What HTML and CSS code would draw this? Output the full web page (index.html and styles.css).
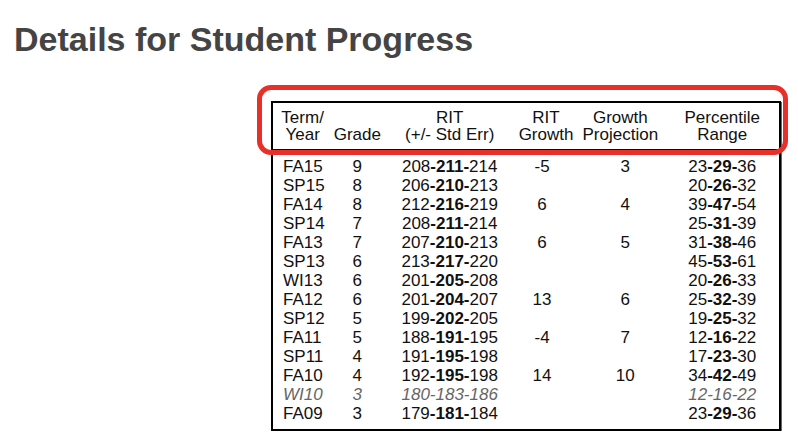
FILE: index.html
```html
<!DOCTYPE html>
<html>
<head>
<meta charset="utf-8">
<link rel="stylesheet" href="styles.css">
</head>
<body>
<h1 class="title">Details for Student Progress</h1>
<div class="wrap">
<table class="progress">
<colgroup>
<col class="c1"><col class="c2"><col class="c3"><col class="c4"><col class="c5"><col class="c6">
</colgroup>
<thead>
<tr>
<th>Term/<br>Year</th>
<th><br>Grade</th>
<th>RIT<br>(+/- Std Err)</th>
<th>RIT<br>Growth</th>
<th>Growth<br>Projection</th>
<th>Percentile<br>Range</th>
</tr>
</thead>
<tbody>
<tr class="first"><td class="term">FA15</td><td>9</td><td>208<b>-211-</b>214</td><td class="gr">-5</td><td class="gp">3</td><td>23<b>-29-</b>36</td></tr>
<tr><td class="term">SP15</td><td>8</td><td>206<b>-210-</b>213</td><td class="gr"></td><td class="gp"></td><td>20<b>-26-</b>32</td></tr>
<tr><td class="term">FA14</td><td>8</td><td>212<b>-216-</b>219</td><td class="gr">6</td><td class="gp">4</td><td>39<b>-47-</b>54</td></tr>
<tr><td class="term">SP14</td><td>7</td><td>208<b>-211-</b>214</td><td class="gr"></td><td class="gp"></td><td>25<b>-31-</b>39</td></tr>
<tr><td class="term">FA13</td><td>7</td><td>207<b>-210-</b>213</td><td class="gr">6</td><td class="gp">5</td><td>31<b>-38-</b>46</td></tr>
<tr><td class="term">SP13</td><td>6</td><td>213<b>-217-</b>220</td><td class="gr"></td><td class="gp"></td><td>45<b>-53-</b>61</td></tr>
<tr><td class="term">WI13</td><td>6</td><td>201<b>-205-</b>208</td><td class="gr"></td><td class="gp"></td><td>20<b>-26-</b>33</td></tr>
<tr><td class="term">FA12</td><td>6</td><td>201<b>-204-</b>207</td><td class="gr">13</td><td class="gp">6</td><td>25<b>-32-</b>39</td></tr>
<tr><td class="term">SP12</td><td>5</td><td>199<b>-202-</b>205</td><td class="gr"></td><td class="gp"></td><td>19<b>-25-</b>32</td></tr>
<tr><td class="term">FA11</td><td>5</td><td>188<b>-191-</b>195</td><td class="gr">-4</td><td class="gp">7</td><td>12<b>-16-</b>22</td></tr>
<tr><td class="term">SP11</td><td>4</td><td>191<b>-195-</b>198</td><td class="gr"></td><td class="gp"></td><td>17<b>-23-</b>30</td></tr>
<tr><td class="term">FA10</td><td>4</td><td>192<b>-195-</b>198</td><td class="gr">14</td><td class="gp">10</td><td>34<b>-42-</b>49</td></tr>
<tr class="muted"><td class="term">WI10</td><td>3</td><td>180-183-186</td><td class="gr"></td><td class="gp"></td><td>12-16-22</td></tr>
<tr class="last"><td class="term">FA09</td><td>3</td><td>179<b>-181-</b>184</td><td class="gr"></td><td class="gp"></td><td>23<b>-29-</b>36</td></tr>
</tbody>
</table>
<div class="highlight"></div>
</div>
</body>
</html>
```
FILE: styles.css
```css
html, body {
  margin: 0;
  padding: 0;
  background: #fff;
}
body {
  font-family: "Liberation Sans", Arial, sans-serif;
  color: #111;
}
.title {
  margin: 19px 0 0 14px;
  font-size: 34px;
  line-height: 40px;
  font-weight: bold;
  color: #444;
}
.wrap {
  position: relative;
  margin: 42px 0 0 0;
  padding-left: 271px;
}
.progress {
  border-collapse: collapse;
  table-layout: fixed;
  width: 510px;
  border: 2px solid #000;
  box-shadow: 1px 1px 0 #666;
  font-size: 17px;
}
.c1 { width: 60px; }
.c2 { width: 50px; }
.c3 { width: 134px; }
.c4 { width: 58px; }
.c5 { width: 90px; }
.c6 { width: 114px; }
.progress th {
  font-weight: normal;
  line-height: 17px;
  padding: 6px 0 6px;
  text-align: center;
  border-bottom: 2px solid #000;
}
.progress td {
  line-height: 19px;
  padding: 0;
  text-align: center;
  white-space: nowrap;
}
.progress td.term {
  text-align: left;
  padding-left: 10px;
}
.progress td.gr { padding-right: 8px; }
.progress td.gp { padding-left: 10px; }
.progress tr.first td { padding-top: 6px; }
.progress tr.last td { padding-bottom: 6px; }
.progress tr.muted td {
  font-style: italic;
  color: #666;
}
.highlight {
  position: absolute;
  left: 257px;
  top: -16px;
  width: 531px;
  height: 70px;
  box-sizing: border-box;
  border: 5px solid #e8302a;
  border-radius: 14px;
}
```
